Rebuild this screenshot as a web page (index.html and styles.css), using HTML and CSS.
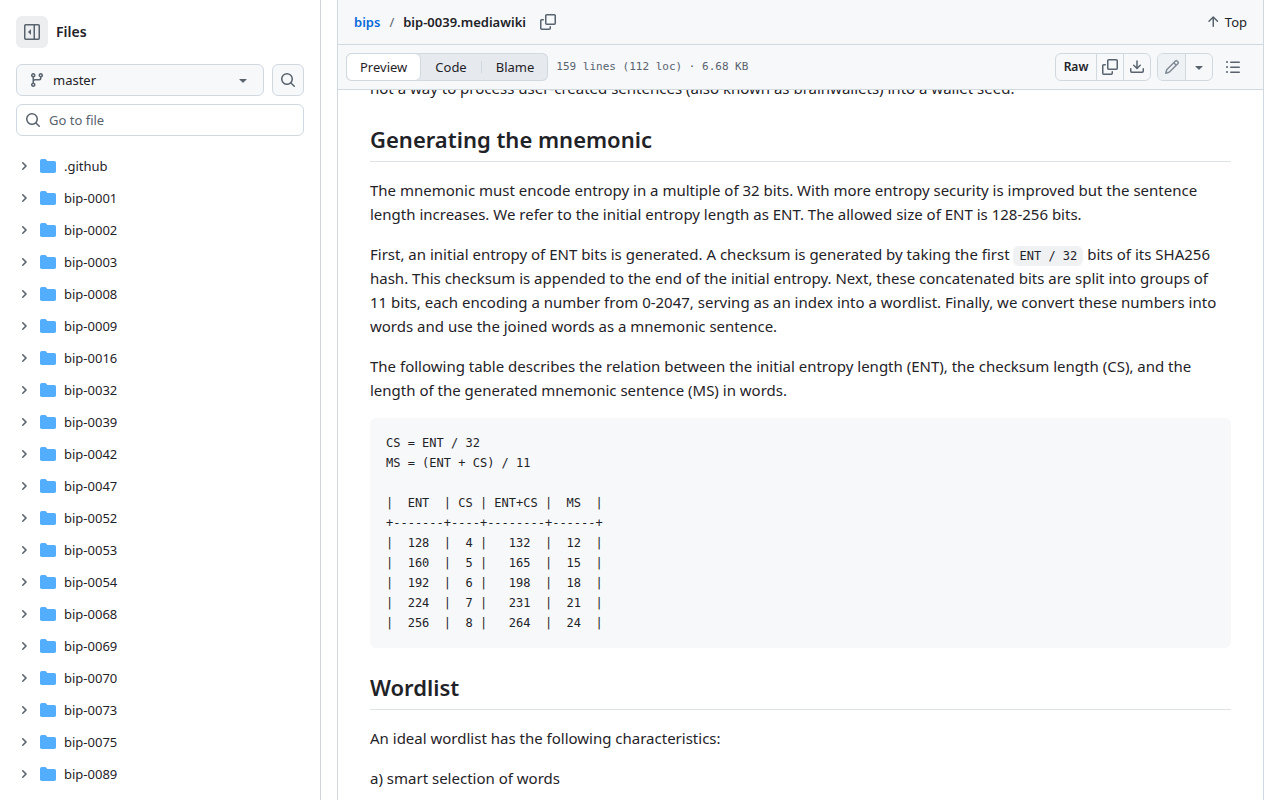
FILE: index.html
```html
<!DOCTYPE html>
<html lang="en">
  <head>
    <meta charset="utf-8">
    <meta name="viewport" content="width=device-width, initial-scale=1">
    <title>bips/bip-0039.mediawiki at master</title>
    <link rel="stylesheet" href="styles.css">
  </head>
  <body>
    <!-- icon sprite -->
    <svg class="sprite" aria-hidden="true">
      <symbol id="ic-sidebar" viewBox="0 0 16 16">
        <path fill-rule="evenodd" d="M1.75 0h12.5C15.216 0 16 .784 16 1.75v12.5A1.75 1.75 0 0 1 14.25 16H1.75A1.75 1.75 0 0 1 0 14.25V1.75C0 .784.784 0 1.75 0ZM1.5 1.75v12.5c0 .138.112.25.25.25H9.5v-13H1.75a.25.25 0 0 0-.25.25ZM11 14.5h3.25a.25.25 0 0 0 .25-.25V1.75a.25.25 0 0 0-.25-.25H11Z"/>
        <path d="m4.177 7.823 2.396-2.396A.25.25 0 0 1 7 5.604v4.792a.25.25 0 0 1-.427.177L4.177 8.177a.25.25 0 0 1 0-.354Z"/>
      </symbol>
      <symbol id="ic-branch" viewBox="0 0 16 16">
        <path d="M9.5 3.25a2.25 2.25 0 1 1 3 2.122V6A2.5 2.5 0 0 1 10 8.5H6a1 1 0 0 0-1 1v1.128a2.251 2.251 0 1 1-1.5 0V5.372a2.25 2.25 0 1 1 1.5 0v1.836A2.493 2.493 0 0 1 6 7h4a1 1 0 0 0 1-1v-.628A2.25 2.25 0 0 1 9.5 3.25Zm-6 0a.75.75 0 1 0 1.5 0 .75.75 0 0 0-1.5 0Zm8.25-.75a.75.75 0 1 0 0 1.5.75.75 0 0 0 0-1.5ZM4.25 12a.75.75 0 1 0 0 1.5.75.75 0 0 0 0-1.5Z"/>
      </symbol>
      <symbol id="ic-caret" viewBox="0 0 16 16">
        <path d="m4.427 7.427 3.396 3.396a.25.25 0 0 0 .354 0l3.396-3.396A.25.25 0 0 0 11.396 7H4.604a.25.25 0 0 0-.177.427Z"/>
      </symbol>
      <symbol id="ic-search" viewBox="0 0 16 16">
        <path d="M10.68 11.74a6 6 0 0 1-7.922-8.982 6 6 0 0 1 8.982 7.922l3.04 3.04a.749.749 0 0 1-.326 1.275.749.749 0 0 1-.734-.215ZM11.5 7a4.499 4.499 0 1 0-8.997 0A4.499 4.499 0 0 0 11.5 7Z"/>
      </symbol>
      <symbol id="ic-chevron" viewBox="0 0 12 12">
        <path d="M4.7 10c-.2 0-.4-.1-.5-.2-.3-.3-.3-.8 0-1.1L6.9 6 4.2 3.3c-.3-.3-.3-.8 0-1.1.3-.3.8-.3 1.1 0l3.3 3.2c.3.3.3.8 0 1.1L5.3 9.7c-.2.2-.4.3-.6.3Z"/>
      </symbol>
      <symbol id="ic-folder" viewBox="0 0 16 16">
        <path d="M1.75 1A1.75 1.75 0 0 0 0 2.75v10.5C0 14.216.784 15 1.75 15h12.5A1.75 1.75 0 0 0 16 13.25v-8.5A1.75 1.75 0 0 0 14.25 3H7.5a.25.25 0 0 1-.2-.1l-.9-1.2C6.07 1.26 5.55 1 5 1H1.75Z"/>
      </symbol>
      <symbol id="ic-copy" viewBox="0 0 16 16">
        <path d="M0 6.75C0 5.784.784 5 1.75 5h1.5a.75.75 0 0 1 0 1.5h-1.5a.25.25 0 0 0-.25.25v7.5c0 .138.112.25.25.25h7.5a.25.25 0 0 0 .25-.25v-1.5a.75.75 0 0 1 1.5 0v1.5A1.75 1.75 0 0 1 9.25 16h-7.5A1.75 1.75 0 0 1 0 14.25Z"/>
        <path d="M5 1.75C5 .784 5.784 0 6.75 0h7.5C15.216 0 16 .784 16 1.75v7.5A1.75 1.75 0 0 1 14.25 11h-7.5A1.75 1.75 0 0 1 5 9.25Zm1.75-.25a.25.25 0 0 0-.25.25v7.5c0 .138.112.25.25.25h7.5a.25.25 0 0 0 .25-.25v-7.5a.25.25 0 0 0-.25-.25Z"/>
      </symbol>
      <symbol id="ic-download" viewBox="0 0 16 16">
        <path d="M2.75 14A1.75 1.75 0 0 1 1 12.25v-2.5a.75.75 0 0 1 1.5 0v2.5c0 .138.112.25.25.25h10.5a.25.25 0 0 0 .25-.25v-2.5a.75.75 0 0 1 1.5 0v2.5A1.75 1.75 0 0 1 13.25 14Z"/>
        <path d="M7.25 7.689V2a.75.75 0 0 1 1.5 0v5.689l1.97-1.969a.749.749 0 1 1 1.06 1.06l-3.25 3.25a.749.749 0 0 1-1.06 0L4.22 6.78a.749.749 0 1 1 1.06-1.06l1.97 1.969Z"/>
      </symbol>
      <symbol id="ic-pencil" viewBox="0 0 16 16">
        <path d="M11.013 1.427a1.75 1.75 0 0 1 2.474 0l1.086 1.086a1.75 1.75 0 0 1 0 2.474l-8.61 8.61c-.21.21-.47.364-.756.445l-3.251.93a.75.75 0 0 1-.927-.928l.929-3.25c.081-.286.235-.547.445-.758l8.61-8.61Zm.176 4.823L9.75 4.81l-6.286 6.287a.253.253 0 0 0-.064.108l-.558 1.953 1.953-.558a.253.253 0 0 0 .108-.064Zm1.238-3.763a.25.25 0 0 0-.354 0L10.811 3.75l1.439 1.44 1.263-1.263a.25.25 0 0 0 0-.354Z"/>
      </symbol>
      <symbol id="ic-list" viewBox="0 0 16 16">
        <path d="M5.75 2.5h8.5a.75.75 0 0 1 0 1.5h-8.5a.75.75 0 0 1 0-1.5Zm0 5h8.5a.75.75 0 0 1 0 1.5h-8.5a.75.75 0 0 1 0-1.5Zm0 5h8.5a.75.75 0 0 1 0 1.5h-8.5a.75.75 0 0 1 0-1.5ZM2 14a1 1 0 1 1 0-2 1 1 0 0 1 0 2Zm1-6a1 1 0 1 1-2 0 1 1 0 0 1 2 0ZM2 4a1 1 0 1 1 0-2 1 1 0 0 1 0 2Z"/>
      </symbol>
      <symbol id="ic-up" viewBox="0 0 16 16">
        <path d="M3.47 7.78a.75.75 0 0 1 0-1.06l4.25-4.25a.75.75 0 0 1 1.06 0l4.25 4.25a.751.751 0 0 1-1.06 1.06L9 4.81v7.44a.75.75 0 0 1-1.5 0V4.81L4.53 7.78a.75.75 0 0 1-1.06 0Z"/>
      </symbol>
    </svg>

    <div class="app">
      <aside class="sidebar">
        <div class="sidebar-head">
          <button class="toggle-tree" type="button" aria-label="Collapse file tree"><svg class="icon"><use href="#ic-sidebar"/></svg></button>
          <h2 class="sidebar-title">Files</h2>
        </div>
        <div class="ref-row">
          <button class="btn branch" type="button" aria-haspopup="true" aria-expanded="false">
            <svg class="icon"><use href="#ic-branch"/></svg>
            <span class="branch-name">master</span>
            <svg class="icon"><use href="#ic-caret"/></svg>
          </button>
          <button class="btn btn-square" type="button" aria-label="Search this repository"><svg class="icon"><use href="#ic-search"/></svg></button>
        </div>
        <label class="filter">
          <svg class="icon"><use href="#ic-search"/></svg>
          <input type="text" placeholder="Go to file" aria-label="Go to file">
        </label>
        <nav aria-label="File tree">
          <ul class="tree">
            <li><a href="#"><svg class="chevron"><use href="#ic-chevron"/></svg><svg class="icon folder"><use href="#ic-folder"/></svg><span>.github</span></a></li>
            <li><a href="#"><svg class="chevron"><use href="#ic-chevron"/></svg><svg class="icon folder"><use href="#ic-folder"/></svg><span>bip-0001</span></a></li>
            <li><a href="#"><svg class="chevron"><use href="#ic-chevron"/></svg><svg class="icon folder"><use href="#ic-folder"/></svg><span>bip-0002</span></a></li>
            <li><a href="#"><svg class="chevron"><use href="#ic-chevron"/></svg><svg class="icon folder"><use href="#ic-folder"/></svg><span>bip-0003</span></a></li>
            <li><a href="#"><svg class="chevron"><use href="#ic-chevron"/></svg><svg class="icon folder"><use href="#ic-folder"/></svg><span>bip-0008</span></a></li>
            <li><a href="#"><svg class="chevron"><use href="#ic-chevron"/></svg><svg class="icon folder"><use href="#ic-folder"/></svg><span>bip-0009</span></a></li>
            <li><a href="#"><svg class="chevron"><use href="#ic-chevron"/></svg><svg class="icon folder"><use href="#ic-folder"/></svg><span>bip-0016</span></a></li>
            <li><a href="#"><svg class="chevron"><use href="#ic-chevron"/></svg><svg class="icon folder"><use href="#ic-folder"/></svg><span>bip-0032</span></a></li>
            <li><a href="#"><svg class="chevron"><use href="#ic-chevron"/></svg><svg class="icon folder"><use href="#ic-folder"/></svg><span>bip-0039</span></a></li>
            <li><a href="#"><svg class="chevron"><use href="#ic-chevron"/></svg><svg class="icon folder"><use href="#ic-folder"/></svg><span>bip-0042</span></a></li>
            <li><a href="#"><svg class="chevron"><use href="#ic-chevron"/></svg><svg class="icon folder"><use href="#ic-folder"/></svg><span>bip-0047</span></a></li>
            <li><a href="#"><svg class="chevron"><use href="#ic-chevron"/></svg><svg class="icon folder"><use href="#ic-folder"/></svg><span>bip-0052</span></a></li>
            <li><a href="#"><svg class="chevron"><use href="#ic-chevron"/></svg><svg class="icon folder"><use href="#ic-folder"/></svg><span>bip-0053</span></a></li>
            <li><a href="#"><svg class="chevron"><use href="#ic-chevron"/></svg><svg class="icon folder"><use href="#ic-folder"/></svg><span>bip-0054</span></a></li>
            <li><a href="#"><svg class="chevron"><use href="#ic-chevron"/></svg><svg class="icon folder"><use href="#ic-folder"/></svg><span>bip-0068</span></a></li>
            <li><a href="#"><svg class="chevron"><use href="#ic-chevron"/></svg><svg class="icon folder"><use href="#ic-folder"/></svg><span>bip-0069</span></a></li>
            <li><a href="#"><svg class="chevron"><use href="#ic-chevron"/></svg><svg class="icon folder"><use href="#ic-folder"/></svg><span>bip-0070</span></a></li>
            <li><a href="#"><svg class="chevron"><use href="#ic-chevron"/></svg><svg class="icon folder"><use href="#ic-folder"/></svg><span>bip-0073</span></a></li>
            <li><a href="#"><svg class="chevron"><use href="#ic-chevron"/></svg><svg class="icon folder"><use href="#ic-folder"/></svg><span>bip-0075</span></a></li>
            <li><a href="#"><svg class="chevron"><use href="#ic-chevron"/></svg><svg class="icon folder"><use href="#ic-folder"/></svg><span>bip-0089</span></a></li>
          </ul>
        </nav>
      </aside>

      <main class="file">
        <header class="file-header">
          <div class="crumbs">
            <a class="crumb-repo" href="#">bips</a>
            <span class="crumb-sep">/</span>
            <h1 class="crumb-file">bip-0039.mediawiki</h1>
            <button class="btn-plain" type="button" aria-label="Copy path"><svg class="icon"><use href="#ic-copy"/></svg></button>
            <a class="to-top" href="#"><svg class="icon"><use href="#ic-up"/></svg>Top</a>
          </div>
          <div class="toolbar">
            <div class="segmented">
              <button class="segment selected" type="button" aria-pressed="true">Preview</button>
              <button class="segment" type="button" aria-pressed="false">Code</button>
              <span class="segment-line"></span>
              <button class="segment" type="button" aria-pressed="false">Blame</button>
            </div>
            <span class="file-info">159 lines (112 loc) · 6.68 KB</span>
            <div class="actions">
              <div class="btn-group">
                <button class="raw" type="button">Raw</button>
                <button type="button" aria-label="Copy raw file"><svg class="icon"><use href="#ic-copy"/></svg></button>
                <button type="button" aria-label="Download raw file"><svg class="icon"><use href="#ic-download"/></svg></button>
              </div>
              <div class="btn-group">
                <button class="edit" type="button" aria-label="Edit file"><svg class="icon"><use href="#ic-pencil"/></svg></button>
                <button type="button" aria-label="More edit options"><svg class="icon"><use href="#ic-caret"/></svg></button>
              </div>
              <button class="btn-plain" type="button" aria-label="Outline"><svg class="icon"><use href="#ic-list"/></svg></button>
            </div>
          </div>
        </header>

        <article class="markdown">
          <p>not a way to process user-created sentences (also known as brainwallets) into a wallet seed.</p>
          <h2>Generating the mnemonic</h2>
          <p>The mnemonic must encode entropy in a multiple of 32 bits. With more entropy security is improved but the sentence length increases. We refer to the initial entropy length as ENT. The allowed size of ENT is 128-256 bits.</p>
          <p>First, an initial entropy of ENT bits is generated. A checksum is generated by taking the first <code>ENT / 32</code> bits of its SHA256 hash. This checksum is appended to the end of the initial entropy. Next, these concatenated bits are split into groups of 11&nbsp;bits, each encoding a number from 0-2047, serving as an index into a wordlist. Finally, we convert these numbers into words and use the joined words as a mnemonic sentence.</p>
          <p>The following table describes the relation between the initial entropy length (ENT), the checksum length (CS), and the length of the generated mnemonic sentence (MS) in words.</p>
<pre>CS = ENT / 32
MS = (ENT + CS) / 11

|  ENT  | CS | ENT+CS |  MS  |
+-------+----+--------+------+
|  128  |  4 |   132  |  12  |
|  160  |  5 |   165  |  15  |
|  192  |  6 |   198  |  18  |
|  224  |  7 |   231  |  21  |
|  256  |  8 |   264  |  24  |</pre>
          <h2>Wordlist</h2>
          <p>An ideal wordlist has the following characteristics:</p>
          <p>a) smart selection of words</p>
        </article>
      </main>
    </div>
  </body>
</html>
```
FILE: styles.css
```css
* {
  box-sizing: border-box;
}

body {
  margin: 0;
  background: #fff;
  color: #1f2328;
  font-family: "Noto Sans", "Open Sans", sans-serif;
  font-size: 13px;
  line-height: 20px;
}

a {
  color: inherit;
  text-decoration: none;
}

button,
input {
  margin: 0;
  padding: 0;
  color: inherit;
  font: inherit;
}

button {
  display: flex;
  align-items: center;
  justify-content: center;
  border: 0;
  background: none;
  cursor: pointer;
}

.sprite {
  display: none;
}

.icon {
  flex: none;
  width: 16px;
  height: 16px;
  fill: #59636e;
}

.app {
  display: flex;
  height: 100vh;
  overflow: hidden;
}

/* file tree */
.sidebar {
  flex: none;
  width: 321px;
  padding: 16px;
  border-right: 1px solid #d1d5da;
  overflow: hidden;
}

.sidebar-head {
  display: flex;
  align-items: center;
  gap: 8px;
  margin-bottom: 16px;
}

.toggle-tree {
  width: 32px;
  height: 32px;
  border-radius: 6px;
  background: #eceef0;
}

.sidebar-title {
  margin: 0;
  font-size: 14px;
  font-weight: 600;
}

.ref-row {
  display: flex;
  gap: 8px;
  margin-bottom: 8px;
}

.btn {
  height: 32px;
  border: 1px solid #d1d9e0;
  border-radius: 6px;
  background: #f6f8fa;
}

.btn-square {
  width: 32px;
}

.branch {
  flex: 1;
  gap: 8px;
  padding: 0 12px;
}

.branch-name {
  flex: 1;
  text-align: left;
}

.filter {
  display: flex;
  align-items: center;
  gap: 8px;
  height: 32px;
  padding: 0 8px;
  border: 1px solid #d1d9e0;
  border-radius: 6px;
}

.filter input {
  flex: 1;
  min-width: 0;
  border: 0;
  outline: 0;
  background: none;
}

.filter input::placeholder {
  color: #59636e;
  opacity: 1;
}

.tree {
  margin: 14px 0 0;
  padding: 0;
  list-style: none;
}

.tree a {
  display: flex;
  align-items: center;
  height: 32px;
  padding-left: 2px;
}

.chevron {
  width: 12px;
  height: 12px;
  margin-right: 10px;
  fill: #59636e;
}

.folder {
  margin-right: 8px;
  fill: #54aeff;
}

/* file view */
.file {
  flex: 1;
  min-width: 0;
  margin: 0 16px;
  border: solid #d1d9e0;
  border-width: 0 1px;
}

.file-header {
  position: relative;
  z-index: 1;
  background: #f6f8fa;
}

.crumbs,
.toolbar {
  display: flex;
  align-items: center;
  height: 45px;
  padding: 0 16px;
  border-bottom: 1px solid #d1d9e0;
}

.crumb-repo,
.crumb-file {
  margin: 0;
  font-size: 13px;
  font-weight: 600;
}

.crumb-repo {
  color: #0969da;
}

.crumb-sep {
  padding: 0 9px;
  color: #59636e;
}

.btn-plain {
  width: 28px;
  height: 28px;
}

.crumbs .btn-plain {
  margin-left: 8px;
}

.to-top {
  display: flex;
  align-items: center;
  gap: 4px;
  margin-left: auto;
}

.toolbar {
  padding: 0 16px 0 8px;
}

.segmented {
  display: flex;
  align-items: center;
  height: 28px;
  border-radius: 6px;
  background: #e6eaef;
  box-shadow: inset 0 0 0 1px #d1d9e0;
}

.segment {
  height: 28px;
  padding: 0 14px;
}

.segment.selected {
  padding: 0 13px;
  border: 1px solid #d1d9e0;
  border-radius: 6px;
  background: #fff;
}

.segment-line {
  width: 1px;
  height: 12px;
  background: #d1d9e0;
}

.file-info {
  margin-left: 8px;
  color: #59636e;
  font-family: "DejaVu Sans Mono", monospace;
  font-size: 11px;
}

.actions {
  display: flex;
  gap: 6px;
  margin-left: auto;
}

.btn-group {
  display: flex;
  height: 28px;
  border: 1px solid #d1d9e0;
  border-radius: 6px;
  overflow: hidden;
}

.btn-group button {
  width: 27px;
}

.btn-group button + button {
  border-left: 1px solid #d1d9e0;
}

.btn-group .raw {
  width: 40px;
  font-size: 12px;
  font-weight: 600;
}

.btn-group .edit {
  background: #eff2f5;
}

.edit .icon {
  fill: #818b98;
}

/* rendered document, scrolled under the header */
.markdown {
  margin-top: -14px;
  padding: 0 32px;
  font-size: 15px;
  line-height: 24px;
}

.markdown p {
  margin: 0 0 16px;
}

.markdown h2 {
  margin: 24px 0 16px;
  padding-bottom: 7px;
  border-bottom: 1px solid #dfe3e8;
  font-size: 22px;
  font-weight: 600;
  line-height: 30px;
}

.markdown code,
.markdown pre {
  font-family: "DejaVu Sans Mono", monospace;
  font-size: 12px;
}

.markdown code {
  padding: 3px 6px;
  border-radius: 6px;
  background: #eff1f3;
  line-height: 14px;
}

.markdown pre {
  margin: 0;
  padding: 15px 16px;
  border-radius: 6px;
  background: #f6f8fa;
  line-height: 20px;
  overflow: hidden;
}
```
